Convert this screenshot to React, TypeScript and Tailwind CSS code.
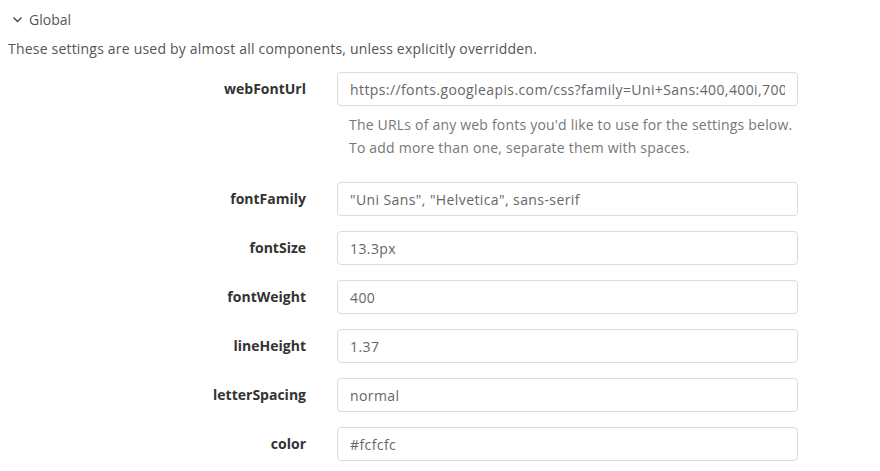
import React from 'react';

const FIELDS = [
  { name: 'fontFamily', value: '"Uni Sans", "Helvetica", sans-serif' },
  { name: 'fontSize', value: '13.3px' },
  { name: 'fontWeight', value: '400' },
  { name: 'lineHeight', value: '1.37' },
  { name: 'letterSpacing', value: 'normal' },
  { name: 'color', value: '#fcfcfc' },
];

const Field: React.FC<{ name: string; value: string; help?: React.ReactNode }> = ({ name, value, help }) => (
  <div className="flex items-start">
    <label className="w-[306px] shrink-0 text-right text-[14px] font-bold text-[#333] leading-[34px]">{name}</label>
    <div className="ml-[31px] w-[461px]">
      <input
        type="text"
        readOnly
        value={value}
        className="w-full h-[34px] bg-white border border-[#dcdcdc] rounded-[4px] px-3 text-[14px] tracking-[0.4px] text-[#666] outline-none"
        style={{ fontFamily: 'inherit' }}
      />
      {help && <p className="mt-[7px] px-3 text-[14px] leading-[23px] tracking-[0.2px] text-[#777] whitespace-nowrap">{help}</p>}
    </div>
  </div>
);

export default function App() {
  return (
    <div className="w-[880px] h-[471px] bg-white overflow-hidden" style={{ fontFamily: '"Open Sans", Lato, sans-serif' }}>
      <div className="flex items-center gap-[6px] pl-[12px] pt-[9px] h-[30px] text-[14px] text-[#555]">
        <svg width="11" height="11" viewBox="0 0 11 11" fill="none" stroke="#444" strokeWidth="1.4">
          <path d="M1.5 3.5 L5.5 7.5 L9.5 3.5" />
        </svg>
        <span>Global</span>
      </div>
      <p className="pl-[8px] mt-[9px] text-[14px] leading-[20px] tracking-[0.2px] text-[#555]">
        These settings are used by almost all components, unless explicitly overridden.
      </p>
      <div className="mt-[13px]">
        <Field
          name="webFontUrl"
          value="https://fonts.googleapis.com/css?family=Uni+Sans:400,400i,700,700i"
          help={<>The URLs of any web fonts you'd like to use for the settings below.<br />To add more than one, separate them with spaces.</>}
        />
        <div className="mt-[23px] flex flex-col gap-[15px]">
          {FIELDS.map(f => (
            <Field key={f.name} name={f.name} value={f.value} />
          ))}
        </div>
      </div>
    </div>
  );
}
